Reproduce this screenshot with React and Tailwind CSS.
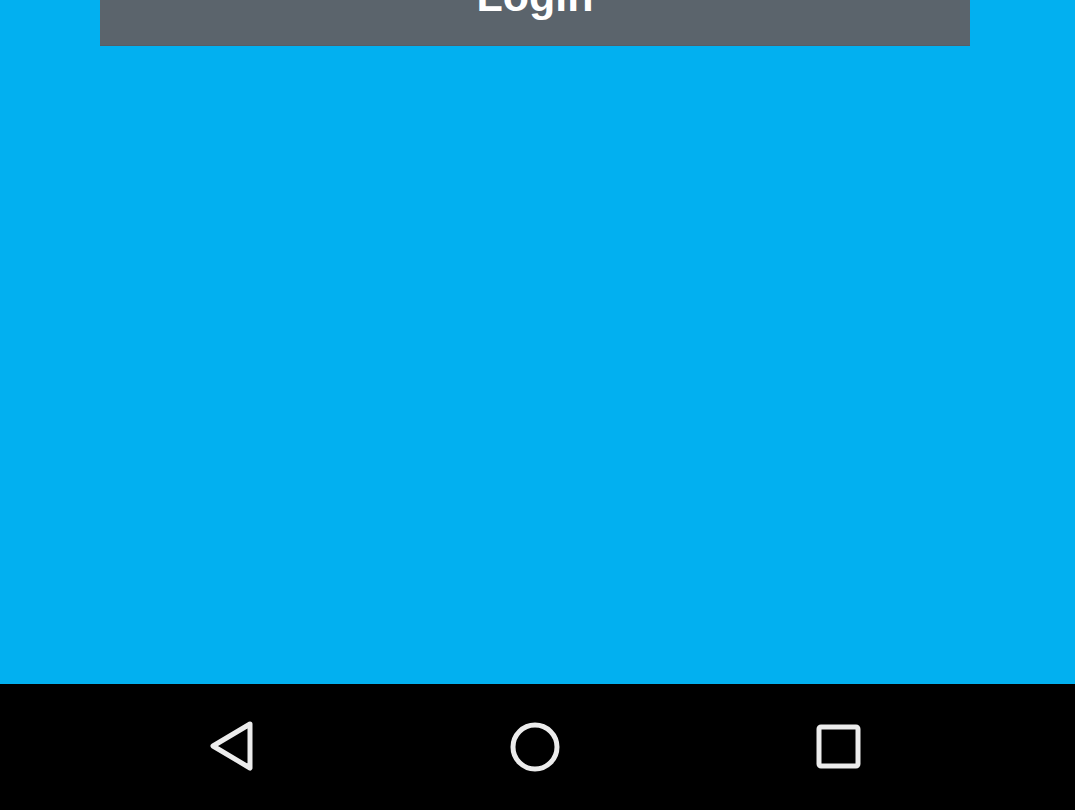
import React from 'react';

const BackIcon = () => (
  <svg width="48" height="52" viewBox="0 0 48 52" fill="none">
    <path d="M41 3 L4 25 L41 47 Z" stroke="#ececec" strokeWidth="5" strokeLinejoin="round" />
  </svg>
);

const HomeIcon = () => (
  <svg width="52" height="52" viewBox="0 0 52 52" fill="none">
    <circle cx="26" cy="26" r="22" stroke="#ececec" strokeWidth="5" />
  </svg>
);

const RecentsIcon = () => (
  <svg width="46" height="46" viewBox="0 0 46 46" fill="none">
    <rect x="3" y="3" width="39" height="39" rx="2" stroke="#ececec" strokeWidth="5" />
  </svg>
);

const App = () => {
  return (
    <div className="w-[1075px] h-[810px] flex flex-col overflow-hidden" style={{ fontFamily: '"Liberation Sans", Arial, sans-serif' }}>
      {/* Conteúdo */}
      <main className="flex-1 bg-[#02b0f0] pl-[100px] pr-[105px]">
        <button className="w-full h-[46px] bg-[#5b646c] border-b border-[#565e66] flex items-end justify-center pb-[27px] overflow-visible">
          <span className="text-white font-bold text-[43px] leading-none">Login</span>
        </button>
      </main>

      {/* Barra de navegação */}
      <nav className="h-[126px] bg-black flex items-center">
        <div className="w-[909px] ml-[80px] grid grid-cols-3 items-center">
          <div className="flex justify-center pl-[2px]"><BackIcon /></div>
          <div className="flex justify-center"><HomeIcon /></div>
          <div className="flex justify-center pl-[2px]"><RecentsIcon /></div>
        </div>
      </nav>
    </div>
  );
};

export default App;
